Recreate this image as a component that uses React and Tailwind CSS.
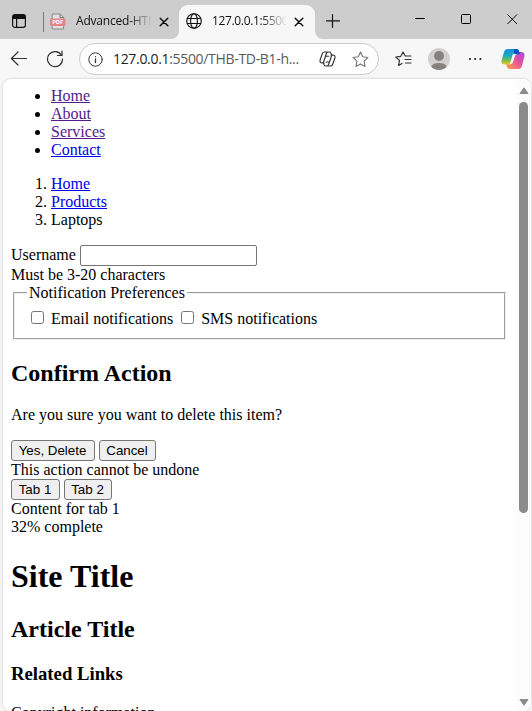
const stroke = { fill: 'none', stroke: 'currentColor', strokeLinecap: 'round', strokeLinejoin: 'round' };

function CloseMark({ className }) {
  return (
    <svg className={className} width="10" height="10" viewBox="0 0 10 10" {...stroke} strokeWidth="1.5">
      <path d="M1.2 1.2 8.8 8.8M8.8 1.2 1.2 8.8" />
    </svg>
  );
}

function TabStrip() {
  return (
    <div className="flex h-[39px] shrink-0 items-start bg-[#cdcdcd] text-[#111]">
      <div className="flex h-[39px] w-[179px] shrink-0 items-center">
        <svg className="ml-[11px] mt-[3px] shrink-0" width="16" height="16" viewBox="0 0 16 16">
          <rect x="1.6" y="1.6" width="12.8" height="12.8" rx="2.4" fill="none" stroke="#111" strokeWidth="1.2" />
          <path d="M1.3 6V4a2.7 2.7 0 0 1 2.7-2.7h8A2.7 2.7 0 0 1 14.7 4v2Z" fill="#111" />
          <path d="M5.6 5v9.4" stroke="#111" strokeWidth="1.2" />
        </svg>
        <div className="ml-4 mt-[5px] h-5 w-px shrink-0 bg-[#777]" />
        <svg className="ml-1.5 mt-[3px] shrink-0" width="16" height="17" viewBox="0 0 16 17">
          <path d="M2.2 6V1h7.9l3.5 3.5V16H2.2v-3" fill="#e2dfdf" stroke="#8b8b8b" />
          <path d="M10 1v3.6h3.6" fill="none" stroke="#777" />
          <rect x="0" y="5.5" width="15.5" height="7.5" rx="1" fill="#e68583" />
          <text x="7.75" y="11.4" textAnchor="middle" fontSize="5.8" fontWeight="700" fill="#fff" className="font-['Open_Sans',sans-serif]">PDF</text>
        </svg>
        <div className="ml-[10px] mt-[3px] w-[76px] shrink-0 overflow-hidden whitespace-nowrap bg-linear-to-r from-[#111] from-70% to-transparent to-100% bg-clip-text font-['Open_Sans',sans-serif] text-[12px] leading-[18px] tracking-[-0.2px] text-transparent">Advanced-HTM</div>
        <CloseMark className="ml-[7px] mt-[4px] shrink-0" />
      </div>
      <div className="mt-[5px] flex h-[34px] w-[136px] shrink-0 items-center rounded-t-[9px] bg-[#f7f7f7]">
        <svg className="-ml-[8px] shrink-0 self-end" width="8" height="8" viewBox="0 0 8 8"><path d="M8 0v8H0a8 8 0 0 0 8-8Z" fill="#f7f7f7" /></svg>
        <svg className="ml-[7px] -mt-[2px] shrink-0" width="16" height="16" viewBox="0 0 16 16" {...stroke} strokeWidth="1.1">
          <circle cx="8" cy="8" r="7.3" /><ellipse cx="8" cy="8" rx="3.4" ry="7.3" /><path d="M1.4 5.5h13.2M1.4 10.5h13.2" />
        </svg>
        <div className="ml-[10px] -mt-[2px] w-[75px] shrink-0 overflow-hidden whitespace-nowrap bg-linear-to-r from-[#111] from-65% to-transparent to-100% bg-clip-text font-['Open_Sans',sans-serif] text-[12px] leading-[18px] tracking-[-0.35px] text-transparent">127.0.0.1:5500</div>
        <CloseMark className="ml-[7px] -mt-px shrink-0" />
        <svg className="-mr-[8px] ml-auto shrink-0 self-end" width="8" height="8" viewBox="0 0 8 8"><path d="M0 0v8h8a8 8 0 0 1-8-8Z" fill="#f7f7f7" /></svg>
      </div>
      <svg className="ml-[11px] mt-[14px] shrink-0" width="14" height="14" viewBox="0 0 14 14" {...stroke} strokeWidth="1.2"><path d="M6.5.7v12.6M.5 6.8h13" /></svg>
      <svg className="ml-[75px] mt-[13px] shrink-0" width="11" height="12" viewBox="0 0 11 12"><path d="M0 5.5h10" stroke="#000" /></svg>
      <svg className="ml-[35px] mt-[14px] shrink-0" width="11" height="11" viewBox="0 0 11 11"><rect x=".5" y=".5" width="9" height="9" rx="1" fill="none" stroke="#000" /></svg>
      <svg className="ml-[35px] mt-[14px] shrink-0" width="11" height="11" viewBox="0 0 11 11"><path d="m.5.5 9.5 9.5M10 .5.5 10" stroke="#000" /></svg>
    </div>
  );
}

function Toolbar() {
  return (
    <div className="flex h-[40px] shrink-0 items-center bg-[#f7f7f7] text-[#333]">
      <svg className="ml-[10px] shrink-0" width="18" height="16" viewBox="0 0 18 16" {...stroke} strokeWidth="1.2"><path d="M16.5 7.5H1.4M8 1 1.4 7.5 8 14" /></svg>
      <svg className="ml-[18px] shrink-0" width="18" height="18" viewBox="0 0 18 18" {...stroke} strokeWidth="1.2"><path d="M15.4 5.2A7.5 7.5 0 1 0 16.5 9M16 1v4.5h-4.5" /></svg>
      <div className="ml-[15px] flex h-8 w-[300px] shrink-0 items-center rounded-full border border-[#cbcbcb] bg-white">
        <svg className="ml-2 shrink-0" width="15" height="15" viewBox="0 0 15 15" {...stroke} strokeWidth="1"><circle cx="7.5" cy="7.5" r="6.7" /><path d="M7.5 7v3.5M7.5 4.6v.1" strokeWidth="1.3" /></svg>
        <div className="ml-[10px] w-[205px] shrink-0 whitespace-nowrap font-['Open_Sans',sans-serif] text-[14px] leading-5 tracking-[-0.32px] text-[#5a5a5a]"><span className="text-[#222]">127.0.0.1</span>:5500/THB-TD-B1-h...</div>
        <svg className="ml-[1px] shrink-0" width="17" height="16" viewBox="0 0 17 16" {...stroke} strokeWidth="1.15">
          <path d="M5.2 1h5.2c1 0 1.5.8 1.8 1.8l.3 1.4M5.2 1C4 1 3.5 2 3.1 3.2L1.2 8.7C.6 10.6 1.2 12 3 12h2.1M11.8 15H6.6c-1 0-1.5-.8-1.8-1.8L4.5 12M11.8 15c1.2 0 1.7-1 2.1-2.2l1.9-5.5c.6-1.9 0-3.3-1.8-3.3h-2.1M9 1c-1 0-1.4.8-1.8 2L4.9 10c-.4 1.2-.8 2-1.8 2M8 15c1 0 1.4-.8 1.8-2L12.1 6c.4-1.2.8-2 1.8-2M6.6 5.2h3.1M7 11h3.2" />
        </svg>
        <svg className="ml-[16px] shrink-0" width="17" height="17" viewBox="0 0 17 17" {...stroke} stroke="#777" strokeWidth="1.1"><path d="m8.5 1 2.2 4.8 5.2.7-3.8 3.6.9 5.3-4.5-2.5L4 15.4l.9-5.3-3.8-3.6 5.2-.7Z" /></svg>
      </div>
      <svg className="ml-[16px] shrink-0" width="17" height="16" viewBox="0 0 17 16" {...stroke} strokeWidth="1.2"><path d="M10.2 5 8 1 5.8 5.3l-5 .7 3.7 3.4-.9 5L7 12.5M10.8 5H16M10 8.5h6M10.5 12H16" /></svg>
      <svg className="ml-[16px] shrink-0" width="22" height="22" viewBox="0 0 22 22"><circle cx="11" cy="11" r="11" fill="#d2d0ce" /><circle cx="11" cy="8" r="5" fill="#85817e" /><path d="M3.3 18.8C4.5 16 7 15 11 15s6.5 1 7.7 3.8A11 11 0 0 1 3.3 18.8Z" fill="#85817e" /></svg>
      <svg className="ml-[18px] shrink-0" width="15" height="4" viewBox="0 0 15 4"><circle cx="2" cy="2" r="1.1" fill="#222" /><circle cx="7.2" cy="2" r="1.1" fill="#222" /><circle cx="12.4" cy="2" r="1.1" fill="#222" /></svg>
      <svg className="ml-[18px] shrink-0" width="24" height="22" viewBox="0 0 24 22">
        <defs>
          <linearGradient id="cool" x1="0" y1="0" x2="0" y2="1"><stop stopColor="#168ce4" /><stop offset=".4" stopColor="#18a9c8" /><stop offset=".7" stopColor="#68bd59" /><stop offset="1" stopColor="#f5c51c" /></linearGradient>
          <linearGradient id="warm" x1="1" y1="0" x2=".1" y2="1"><stop stopColor="#9b50f0" /><stop offset=".45" stopColor="#e54ea0" /><stop offset="1" stopColor="#ff9b4b" /></linearGradient>
        </defs>
        <path d="M17 21H8.5c-1.5 0-2.2-1.2-2.6-2.5l-.8-2.7H8c1.6 0 2.3-1 2.8-2.6l2.2-6.9c.6-1.8 1.5-2.2 3-2.2h4c3.3 0 4 2.2 3.2 5L21 17.9c-.7 2.1-1.8 3.1-4 3.1Z" fill="url(#warm)" />
        <path d="M7 1h8.5c1.5 0 2.2 1.2 2.6 2.5l.8 2.7H16c-1.6 0-2.3 1-2.8 2.6l-2 6c-.6 1.2-1.5 1.7-3 1.7H4c-3.3 0-4-2.2-3.2-5L3 4.1C3.7 2 4.8 1 7 1Z" fill="url(#cool)" />
        <path d="M12.6 1h2.9c1.5 0 2.2 1.2 2.6 2.5l.8 2.7H16c-1 0-1.8.5-2.3 1.3Z" fill="#164bc7" />
        <path d="M12 6h4.6c-1.7.2-2.4 1.200-2.900 2.800l-1.500 4.700c-.6 1.900-1.700 2.800-3.500 2.800H7.200c1.200-.1 1.900-.8 2.300-2.100l1.700-6c.2-.9.400-1.600.8-2.200Z" fill="#fbfbfb" />
      </svg>
    </div>
  );
}

const link = 'underline decoration-1 underline-offset-[1px] [text-decoration-skip-ink:none]';

function PushButton({ className, children }) {
  return (
    <button className={`h-[21px] rounded-[3px] border border-[#767676] bg-[#efefef] pr-px text-center font-['Liberation_Sans',Arial,sans-serif] text-[13.333px] leading-[18px] text-black ${className}`}>{children}</button>
  );
}

function Checkbox({ className }) {
  return <input type="checkbox" className={`h-[13px] w-[13px] shrink-0 appearance-none rounded-[2.5px] border border-[#767676] bg-white ${className}`} />;
}

function Document() {
  return (
    <main className="h-full min-w-0 flex-1 overflow-hidden px-2 pt-2 font-['Liberation_Serif','Times_New_Roman',serif] text-[16px] leading-[18px] text-black">
      <ul className="list-disc pl-10">
        <li><a className={`${link} text-[#551a8b]`}>Home</a></li>
        <li><a className={`${link} text-[#551a8b]`}>About</a></li>
        <li><a className={`${link} text-[#551a8b]`}>Services</a></li>
        <li><a className={`${link} text-[#0000ee]`}>Contact</a></li>
      </ul>
      <ol className="mt-4 list-decimal pl-10">
        <li><a className={`${link} text-[#0000ee]`}>Home</a></li>
        <li><a className={`${link} text-[#0000ee]`}>Products</a></li>
        <li>Laptops</li>
      </ol>
      <div className="mt-4 flex h-[21px] items-start gap-1">
        <label className="pt-px">Username</label>
        <input className="h-[21px] w-[177px] rounded-[2px] border border-[#767676] bg-white" />
      </div>
      <div>Must be 3-20 characters</div>
      <fieldset className="mx-[2px] h-[56px] w-[493px] border-2 border-[#f0f0f0] px-3 [border-style:groove]">
        <legend className="px-[2px]">Notification Preferences</legend>
        <div className="flex h-[34px] items-center">
          <Checkbox className="-mt-[3px] ml-1" />
          <label className="ml-[7px]">Email notifications</label>
          <Checkbox className="-mt-[3px] ml-2" />
          <label className="ml-[7px]">SMS notifications</label>
        </div>
      </fieldset>
      <h2 className="mt-5 text-[24px] leading-[27px] font-bold">Confirm Action</h2>
      <p className="mt-[19px] mb-4">Are you sure you want to delete this item?</p>
      <div className="flex gap-1"><PushButton className="w-[84px]">Yes, Delete</PushButton><PushButton className="w-[57px]">Cancel</PushButton></div>
      <div>This action cannot be undone</div>
      <div className="flex gap-1"><PushButton className="w-[49px]">Tab 1</PushButton><PushButton className="w-[48px]">Tab 2</PushButton></div>
      <div>Content for tab 1</div>
      <div>32% complete</div>
      <h1 className="mt-[22px] text-[32px] leading-[37px] font-bold">Site Title</h1>
      <h2 className="mt-[21px] text-[24px] leading-[27px] font-bold">Article Title</h2>
      <h3 className="mt-5 text-[18.72px] leading-[22px] font-bold">Related Links</h3>
      <p className="mt-[19px] whitespace-nowrap">Copyright information</p>
    </main>
  );
}

export default function App() {
  return (
    <div className="flex h-[711px] w-[532px] flex-col overflow-hidden bg-[#f7f7f7]">
      <TabStrip />
      <Toolbar />
      <div className="ml-[3px] flex h-[632px] w-[528px] overflow-hidden rounded-[8px] bg-white shadow-[0_0_2px_1px_#dedede]">
        <Document />
        <div className="flex w-[15px] shrink-0 flex-col items-center bg-[#fcfcfc]">
          <svg className="mt-2 shrink-0" width="10" height="8" viewBox="0 0 10 8"><path d="M5 .8 9 6.5H1Z" fill="#8b8b8b" stroke="#8b8b8b" strokeLinejoin="round" /></svg>
          <div className="mt-[7px] h-[411px] w-[9px] shrink-0 rounded-full bg-[#8b8b8b]" />
          <svg className="mt-auto mb-[5px] shrink-0" width="10" height="8" viewBox="0 0 10 8"><path d="M5 7.2 9 1.5H1Z" fill="#8b8b8b" stroke="#8b8b8b" strokeLinejoin="round" /></svg>
        </div>
      </div>
    </div>
  );
}
